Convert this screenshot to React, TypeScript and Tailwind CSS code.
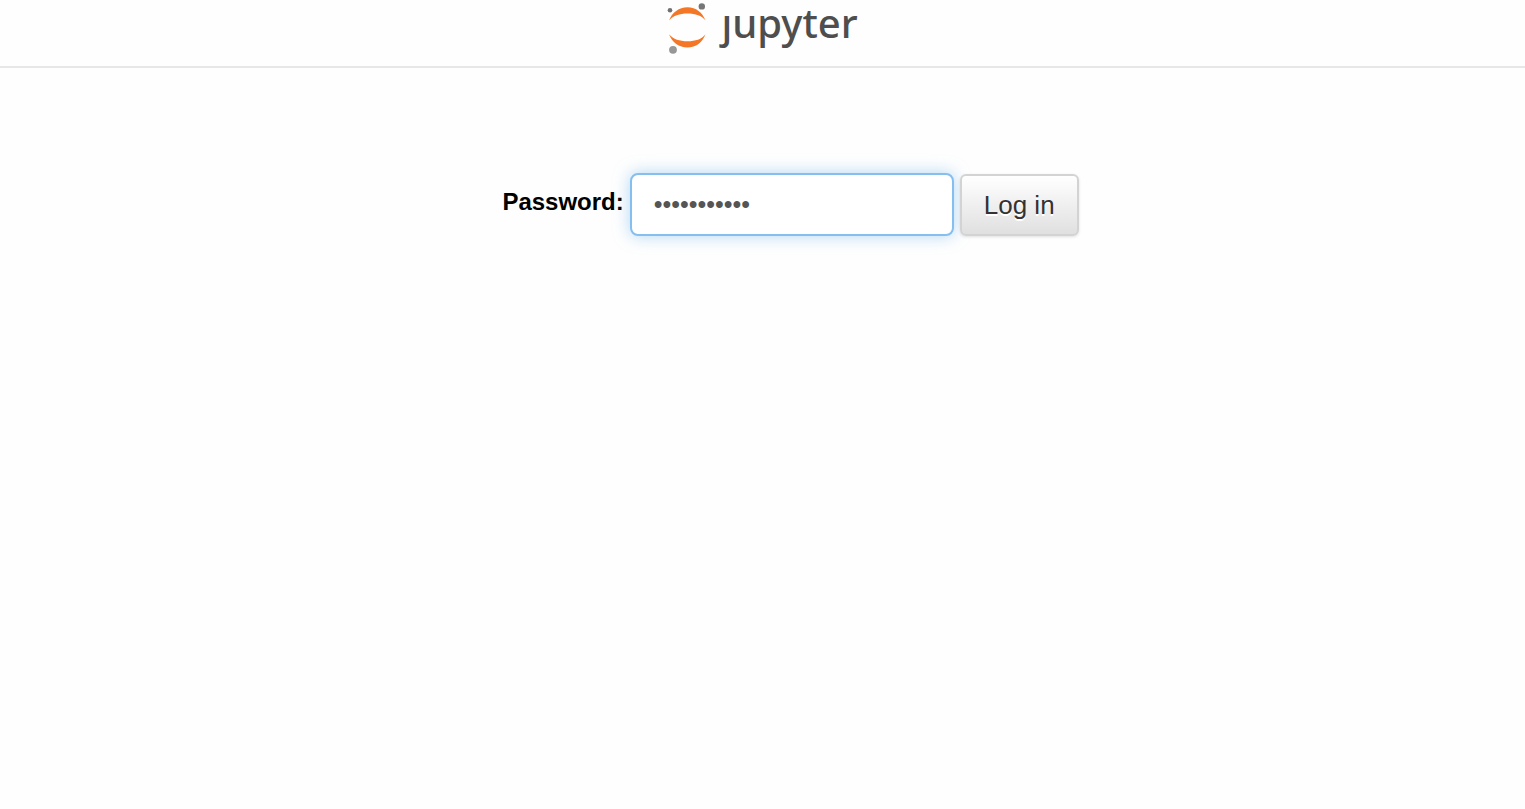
import { useState } from "react";

function JupyterMark() {
  return (
    <svg width="40" height="54" viewBox="0 0 40 54" aria-hidden>
      <path d="M2 20.5C5 12.5 12 7.2 20.5 7.2S35.5 12.5 38.5 20.5C34.5 15.5 28.5 13.5 20.5 13.5S6.5 15.500 2 20.500Z" fill="#F37726" />
      <path d="M2 34.3C5 42.3 12 47.6 20.5 47.6S35.5 42.3 38.5 34.3C34.5 39.3 28.5 41.3 20.5 41.3S6.5 39.3 2 34.3Z" fill="#F37726" />
      <circle cx="3" cy="10.3" r="2.3" fill="#717171" />
      <circle cx="34.8" cy="6.4" r="3.2" fill="#767677" />
      <circle cx="6" cy="49.8" r="3.9" fill="#989798" />
    </svg>
  );
}

function Header() {
  return (
    <header className="flex h-[68px] justify-center border-b-2 border-[#e7e7e7]">
      <a href="/" aria-label="jupyter" className="flex h-[54px] items-start gap-3.5">
        <JupyterMark />
        <span className="font-['Noto_Sans',sans-serif] text-[40px] font-medium leading-[46px] text-[#4e4e4e]">
          ȷupyter
        </span>
      </a>
    </header>
  );
}

function LoginForm() {
  const [password, setPassword] = useState("correcthors");

  return (
    <form
      onSubmit={(e) => e.preventDefault()}
      className="flex items-center justify-center gap-1.5 pl-14"
    >
      <label htmlFor="password_input" className="pb-1.5 text-2xl font-bold text-black">
        Password:
      </label>
      <input
        id="password_input"
        type="password"
        name="password"
        value={password}
        onChange={(e) => setPassword(e.target.value)}
        className="h-[63px] w-[324px] rounded-lg border-2 border-[#84bff0] bg-white px-[22px] text-[25px] text-[#555] shadow-[0_0_16px_rgba(102,175,233,0.5)] outline-none"
      />
      <button
        type="submit"
        className="h-[62px] rounded-md border-2 border-[#d3d3d3] bg-linear-to-b from-white to-[#e0e0e0] px-[22px] pt-0.5 text-[26px] text-[#333] shadow-[0_1px_3px_rgba(0,0,0,0.12)] text-shadow-[0_2px_0_#fff]"
      >
        Log in
      </button>
    </form>
  );
}

export default function App() {
  return (
    <div className="min-h-screen bg-[#fefefe] font-['Liberation_Sans',sans-serif]">
      <Header />
      <main className="pt-[105px]">
        <LoginForm />
      </main>
    </div>
  );
}
